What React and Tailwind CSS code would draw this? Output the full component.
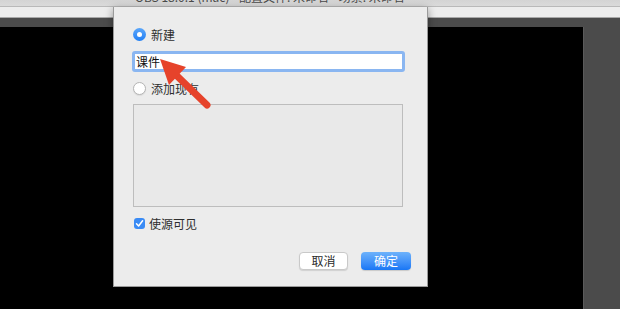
import React from 'react';

const cjk = { fontFamily: '"Noto Sans CJK SC", "Liberation Sans", sans-serif' };

const Radio = ({ checked, label }) => (
    <div className="flex items-center h-[13px] gap-[5px] ml-[1px]">
        {checked ? (
            <div className="w-[13px] h-[13px] rounded-full bg-gradient-to-b from-[#5aa6fa] to-[#1f7ff4] flex items-center justify-center">
                <div className="w-[5px] h-[5px] rounded-full bg-white" />
            </div>
        ) : (
            <div className="w-[13px] h-[13px] rounded-full bg-white border border-[#b4b4b4] shadow-[0_1px_1px_rgba(0,0,0,0.08)]" />
        )}
        <span className="text-[12px] leading-none text-[#2e2e2e]" style={cjk}>{label}</span>
    </div>
);

const App = () => {
    return (
        <div className="relative w-[620px] h-[309px] overflow-hidden bg-black">
            <div className="flex flex-col h-full">
                <div className="h-[7px] bg-gradient-to-b from-[#d4d4d4] to-[#dadada] border-b border-[#b9b9b9] overflow-hidden pl-[135px]">
                    <div className="text-[12px] leading-[14px] -mt-[10px] text-[#4a4a4a] whitespace-nowrap" style={cjk}>
                        OBS 18.0.1 (mac) - 配置文件: 未命名 - 场景: 未命名
                    </div>
                </div>
                <div className="h-[11px] bg-[#ededed] border-b border-[#a8a8a8]" />
                <div className="flex-1 bg-[#4b4b4b] pt-[9px] flex">
                    <div className="w-[584px] bg-black border-r border-[#5a5a5a]" />
                </div>
            </div>

            <div className="absolute left-[113px] top-[7px] w-[315px] h-[280px] bg-[#ececec] border-l border-r border-b border-[#9a9a9a] shadow-[0_2px_8px_rgba(0,0,0,0.4)] flex flex-col pl-[18px] pr-[23px] pt-[21px]">
                <Radio checked label="新建" />
                <div className="mt-[10px] h-[21px] w-[273px] rounded-[3px] border-[3px] border-[#8ab6f1] bg-white flex items-center pl-[1px]">
                    <span className="text-[12px] leading-none text-[#111]" style={cjk}>课件</span>
                </div>
                <div className="mt-[10px]">
                    <Radio label="添加现有" />
                </div>
                <div className="mt-[9px] ml-[1px] h-[103px] w-[270px] border border-[#bdbdbd] bg-[#e9e9e9]" />
                <div className="mt-[11px] ml-[2px] flex items-center gap-[4px] h-[11px]">
                    <div className="w-[11px] h-[11px] rounded-[3px] bg-[#3a8bf5] flex items-center justify-center">
                        <svg width="9" height="9" viewBox="0 0 9 9">
                            <path d="M1.5 4.8 L3.6 7 L7.6 1.8" fill="none" stroke="white" strokeWidth="1.5" strokeLinecap="round" strokeLinejoin="round" />
                        </svg>
                    </div>
                    <span className="text-[12px] leading-none text-[#2e2e2e]" style={cjk}>使源可见</span>
                </div>
                <div className="mt-[23px] flex justify-end gap-[13px] w-[279px]">
                    <div className="w-[49px] h-[18px] rounded-[4px] bg-white border border-[#c9c9c9] shadow-[0_1px_1px_rgba(0,0,0,0.12)] flex items-center justify-center">
                        <span className="text-[12px] leading-none text-[#2a2a2a]" style={cjk}>取消</span>
                    </div>
                    <div className="w-[50px] h-[18px] rounded-[4px] bg-gradient-to-b from-[#6db2fb] to-[#1776f5] flex items-center justify-center shadow-[0_1px_1px_rgba(0,0,0,0.15)]">
                        <span className="text-[12px] leading-none text-white" style={cjk}>确定</span>
                    </div>
                </div>
            </div>

            <svg className="absolute left-0 top-0 pointer-events-none" width="620" height="309">
                <line x1="175" y1="74" x2="207" y2="105" stroke="#e6432b" strokeWidth="7" strokeLinecap="round" />
                <polygon points="160,59 186,67 169,85" fill="#e6432b" />
            </svg>
        </div>
    );
};

export default App;
